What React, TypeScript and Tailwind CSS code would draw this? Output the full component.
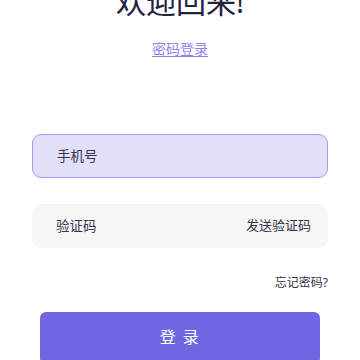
export default function App() {
  return (
    <div
      className="w-[360px] h-[360px] overflow-hidden bg-white"
      style={{ fontFamily: '"Noto Sans", "Noto Sans CJK SC", sans-serif' }}
    >
      <div className="flex flex-col px-8">
        <h1 className="mt-[-18px] text-center text-[30px] leading-[40px] text-[#23223f]">欢迎回来!</h1>
        <div className="mt-[16px] text-center leading-[20px]">
          <a className="text-[14px] text-[#8f84ee] underline underline-offset-2">密码登录</a>
        </div>

        <div className="mt-[75px] h-[44px] rounded-[9px] border border-[#a79df0] bg-[#e2e0f9] flex items-center px-6">
          <span className="text-[13.5px] text-[#34334a]">手机号</span>
        </div>

        <div className="mt-[26px] h-[44px] rounded-[9px] bg-[#f6f6f7] flex items-center justify-between pl-6 pr-[17px]">
          <span className="text-[13.5px] text-[#34334a]">验证码</span>
          <span className="text-[13px] text-[#34334a]">发送验证码</span>
        </div>

        <div className="mt-[27px] flex justify-end">
          <span className="text-[12px] leading-[16px] text-[#34334a]">忘记密码?</span>
        </div>

        <button className="mx-2 mt-[21px] h-[52px] rounded-[6px] bg-[#7166e1] pb-[3px] text-white text-[16px] tracking-[1.5px]">
          登 录
        </button>
      </div>
    </div>
  );
}
